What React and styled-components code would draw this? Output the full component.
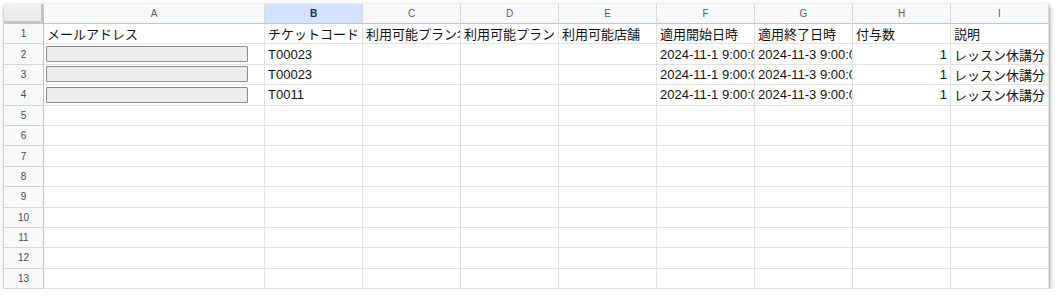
import React from "react";
import styled, { createGlobalStyle } from "styled-components";

const columns = ["A", "B", "C", "D", "E", "F", "G", "H", "I"];
const selectedColumn = "B";
const rowCount = 13;

// values per row, keyed by column; A holds a masked e-mail field
const rows = [
  { A: "メールアドレス", B: "チケットコード", C: "利用可能プラン名", D: "利用可能プラン", E: "利用可能店舗", F: "適用開始日時", G: "適用終了日時", H: "付与数", I: "説明" },
  { mask: true, B: "T00023", F: "2024-11-1 9:00:00", G: "2024-11-3 9:00:00", H: 1, I: "レッスン休講分" },
  { mask: true, B: "T00023", F: "2024-11-1 9:00:00", G: "2024-11-3 9:00:00", H: 1, I: "レッスン休講分" },
  { mask: true, B: "T0011", F: "2024-11-1 9:00:00", G: "2024-11-3 9:00:00", H: 1, I: "レッスン休講分" },
];

function App() {
  return (
    <>
      <GlobalStyle />
      <Sheet>
        <Grid>
          <Corner />
          {columns.map((c) => (
            <ColHeader key={c} $selected={c === selectedColumn}>
              {c}
            </ColHeader>
          ))}
          {Array.from({ length: rowCount }, (_, i) => {
            const row = rows[i] || {};
            return (
              <React.Fragment key={i}>
                <RowHeader>{i + 1}</RowHeader>
                {columns.map((c) => {
                  const value = row[c];
                  return (
                    <Cell key={c} $numeric={typeof value === "number"}>
                      {c === "A" && row.mask ? <MaskedField /> : value}
                    </Cell>
                  );
                })}
              </React.Fragment>
            );
          })}
        </Grid>
      </Sheet>
    </>
  );
}

export default App;

const GlobalStyle = createGlobalStyle`
  body {
    margin: 0;
    background: #ffffff;
    font-family: "Liberation Sans", Arial, "Noto Sans CJK JP", sans-serif;
  }
`;

const Sheet = styled.div`
  margin: 4px 0 0 4px;
  width: 1045px;
  background: #ffffff;
  box-shadow: 0 1px 2px rgba(0, 0, 0, 0.25), 1px 2px 5px rgba(0, 0, 0, 0.3);
`;

const Grid = styled.div`
  display: grid;
  grid-template-columns: 40px 221px repeat(8, 98px);
  grid-template-rows: 20px repeat(${rowCount}, 20.4px);
`;

const Corner = styled.div`
  box-sizing: border-box;
  background: linear-gradient(180deg, #f1f1f1, #e9e9e9);
  border-right: 3px solid #c3c3c3;
  border-bottom: 3px solid #c3c3c3;
`;

const ColHeader = styled.div`
  box-sizing: border-box;
  display: flex;
  align-items: center;
  justify-content: center;
  font-size: 10px;
  color: ${(p) => (p.$selected ? "#0b2a57" : "#5b5b5b")};
  font-weight: ${(p) => (p.$selected ? 700 : 400)};
  background: ${(p) => (p.$selected ? "#d3e3fd" : "#f8f9fa")};
  border-right: 1px solid #dadada;
  border-bottom: 1px solid #c4c4c4;
`;

const RowHeader = styled.div`
  box-sizing: border-box;
  display: flex;
  align-items: center;
  justify-content: center;
  font-size: 10px;
  color: #4a4a4a;
  background: #f8f9fa;
  border-right: 1px solid #c4c4c4;
  border-bottom: 1px solid #d6d6d6;
`;

const Cell = styled.div`
  box-sizing: border-box;
  display: flex;
  align-items: center;
  justify-content: ${(p) => (p.$numeric ? "flex-end" : "flex-start")};
  padding: 0 3px;
  overflow: hidden;
  white-space: nowrap;
  font-family: "Liberation Sans", Arial, "Noto Sans CJK JP", sans-serif;
  font-size: 13px;
  color: #111111;
  border-right: 1px solid #e2e2e2;
  border-bottom: 1px solid #e2e2e2;
`;

const MaskedField = styled.div`
  box-sizing: border-box;
  width: 202px;
  height: 16px;
  margin-left: -1px;
  background: #ededed;
  border: 1px solid #8c8c8c;
  border-radius: 1px;
`;
